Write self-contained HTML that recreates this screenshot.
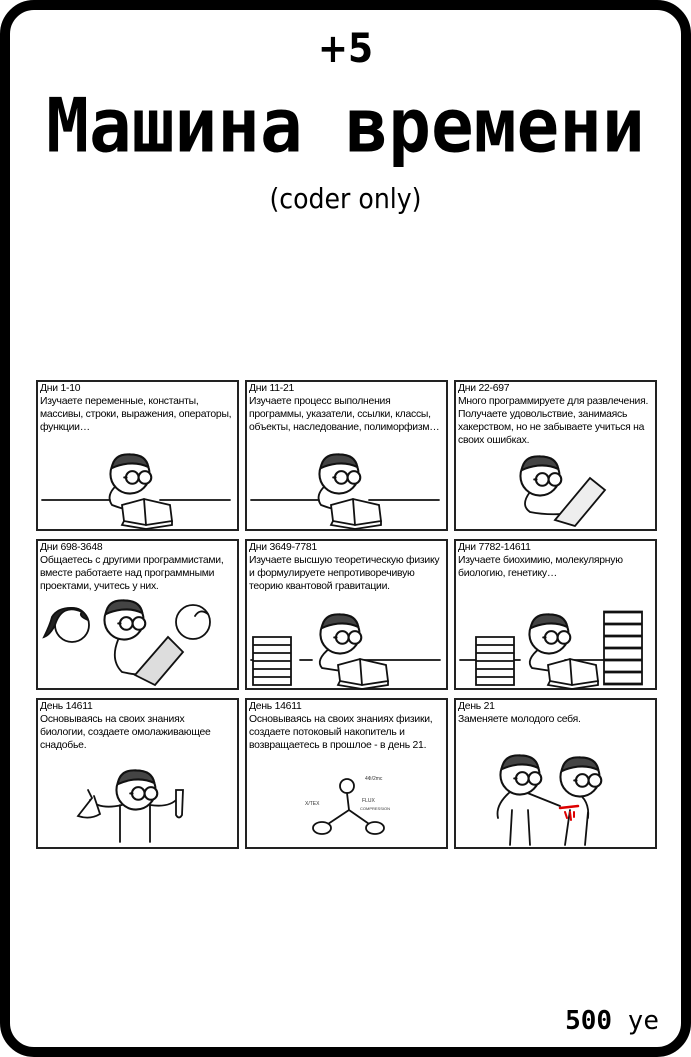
<!DOCTYPE html>
<html><head><meta charset="utf-8"><style>
html,body{margin:0;padding:0;background:#fff}
body{width:691px;height:1057px;position:relative;overflow:hidden}
.card{position:absolute;left:0;top:0;width:671px;height:1037px;border:10px solid #000;border-radius:34px;background:#fff}
.t{position:absolute;left:0;width:691px;text-align:center;color:#000}
.p{position:absolute;width:197px;height:147px;border:2px solid #222;font-family:"Liberation Sans",sans-serif;font-size:10.4px;line-height:13px;padding:0 0 0 2px;box-sizing:content-box;color:#000;letter-spacing:-0.25px}
.p div{padding-left:0}
</style></head><body>
<div class="card"></div>
<div class="t" style="top:24px;font-family:'DejaVu Sans Condensed','DejaVu Sans',sans-serif;font-weight:bold;font-size:40px;line-height:50px">+5</div>
<div class="t" style="top:84px;font-family:'DejaVu Sans Mono',monospace;font-weight:bold;font-size:71px;line-height:84px;transform:scaleY(1.06)">Машина времени</div>
<div class="t" style="top:182px;font-family:'DejaVu Sans Condensed','DejaVu Sans',sans-serif;font-size:28px;line-height:34px">(coder only)</div>

<div class="p" style="left:36px;top:380px"><div>Дни 1-10<br>Изучаете переменные, константы,<br>массивы, строки, выражения, операторы,<br>функции…</div></div>
<div class="p" style="left:245px;top:380px"><div>Дни 11-21<br>Изучаете процесс выполнения<br>программы, указатели, ссылки, классы,<br>объекты, наследование, полиморфизм…</div></div>
<div class="p" style="left:454px;top:380px"><div>Дни 22-697<br>Много программируете для развлечения.<br>Получаете удовольствие, занимаясь<br>хакерством, но не забываете учиться на<br>своих ошибках.</div></div>
<div class="p" style="left:36px;top:539px"><div>Дни 698-3648<br>Общаетесь с другими программистами,<br>вместе работаете над программными<br>проектами, учитесь у них.</div></div>
<div class="p" style="left:245px;top:539px"><div>Дни 3649-7781<br>Изучаете высшую теоретическую физику<br>и формулируете непротиворечивую<br>теорию квантовой гравитации.</div></div>
<div class="p" style="left:454px;top:539px"><div>Дни 7782-14611<br>Изучаете биохимию, молекулярную<br>биологию, генетику…</div></div>
<div class="p" style="left:36px;top:698px"><div>День 14611<br>Основываясь на своих знаниях<br>биологии, создаете омолаживающее<br>снадобье.</div></div>
<div class="p" style="left:245px;top:698px"><div>День 14611<br>Основываясь на своих знаниях физики,<br>создаете потоковый накопитель и<br>возвращаетесь в прошлое - в день 21.</div></div>
<div class="p" style="left:454px;top:698px"><div>День 21<br>Заменяете молодого себя.</div></div>

<svg style="position:absolute;left:0;top:0" width="691" height="1057" fill="none" stroke="#111" stroke-width="1.8" stroke-linecap="round">
<defs>
<g id="hd" transform="scale(1.15)"><circle r="17" fill="#fff"/><path d="M-16,-5 Q-14,-18 0,-17 Q14,-17 16,-6 Q8,-10 -2,-9 Q-10,-8 -16,-5Z" fill="#444"/><circle cx="2" cy="3" r="5.5" fill="#fff"/><circle cx="13" cy="3" r="5.5" fill="#fff"/><path d="M-5,3 L-3,3"/></g>
<g id="bk"><path d="M0,0 L22,-6 L48,0 L50,16 L24,20 L2,16Z" fill="#fff"/><path d="M22,-6 L24,20 M2,16 L0,20 L24,24 L50,20 L50,16"/></g>
<g id="st"><path d="M0,0 h38 v8 h-38z M0,8 h38 v8 h-38z M0,16 h38 v8 h-38z M0,24 h38 v8 h-38z M0,32 h38 v8 h-38z M0,40 h38 v8 h-38z" fill="#fff"/></g>
</defs>
<!-- panel 1 -->
<path d="M42,500 H110 M160,500 H230"/>
<path d="M118,484 Q105,495 112,505 Q125,510 138,512"/>
<use href="#bk" x="122" y="505"/>
<use href="#hd" x="130" y="474"/>
<!-- panel 2 -->
<path d="M251,500 H319 M369,500 H439"/>
<path d="M327,484 Q314,495 321,505 Q334,510 347,512"/>
<use href="#bk" x="331" y="505"/>
<use href="#hd" x="339" y="474"/>
<!-- panel 3 -->
<path d="M530,492 Q520,505 530,512 Q545,515 562,514"/>
<path d="M555,520 L590,478 L605,490 L575,526Z M555,520 L575,526" fill="#eee"/>
<use href="#hd" x="540" y="476"/>
<!-- panel 4 -->
<g transform="translate(72,625)"><circle r="17" fill="#fff"/><path d="M10,-13 Q-10,-22 -17,0 Q-22,10 -28,12 Q-22,0 -20,-8 Q-14,-18 2,-17 Q12,-16 16,-5 Q6,-9 10,-13Z" fill="#222"/></g>
<path d="M118,640 Q110,660 122,672 Q140,676 150,674"/>
<path d="M135,675 L168,637 L183,652 L155,685Z" fill="#ddd"/>
<use href="#hd" x="124" y="620"/>
<circle cx="193" cy="622" r="17" fill="#fff"/><path d="M195,616 Q200,608 208,614"/>
<!-- panel 5 -->
<path d="M251,660 H265 M300,660 H312 M360,660 H440"/>
<use href="#st" x="253" y="637"/>
<path d="M330,648 Q315,660 322,668 Q335,670 348,672"/>
<use href="#bk" x="338" y="665"/>
<use href="#hd" x="340" y="634"/>
<!-- panel 6 -->
<path d="M460,660 H476 M512,660 H520 M565,660 H640"/>
<use href="#st" x="476" y="637"/>
<g transform="translate(604,612) scale(1,1.5)"><use href="#st"/></g>
<path d="M540,648 Q525,660 532,668 Q545,670 558,672"/>
<use href="#bk" x="548" y="665"/>
<use href="#hd" x="549" y="634"/>
<!-- panel 7 -->
<path d="M122,805 Q100,810 90,800 M150,805 Q170,808 178,798 M120,805 L120,842 M150,805 L150,842"/>
<path d="M88,790 L92,798 L78,816 Q90,820 100,814 L94,796" fill="#fff"/>
<path d="M176,790 L183,790 L182,815 Q179,820 176,815Z" fill="#fff"/>
<use href="#hd" x="136" y="790"/>
<!-- panel 8 -->
<circle cx="347" cy="786" r="7" fill="#fff"/><path d="M347,793 L349,810 M349,810 L325,826 M349,810 L372,826"/>
<ellipse cx="322" cy="828" rx="9" ry="6" fill="#fff"/><ellipse cx="375" cy="828" rx="9" ry="6" fill="#fff"/>
<text x="305" y="805" font-size="5" font-family="Liberation Sans" fill="#333" stroke="none">Х/ТЕХ</text>
<text x="365" y="780" font-size="5" font-family="Liberation Sans" fill="#333" stroke="none">4Ф/2mc</text>
<text x="362" y="802" font-size="5" font-family="Liberation Sans" fill="#333" stroke="none">FLUX</text>
<text x="360" y="810" font-size="4" font-family="Liberation Sans" fill="#333" stroke="none">COMPRESSION</text>
<!-- panel 9 -->
<path d="M510,792 Q495,805 498,818 M525,792 L560,806 M512,810 L510,845 M528,810 L530,845"/>
<path d="M576,792 Q590,800 588,818 M570,810 L565,845 M588,812 L585,845"/>
<path d="M560,808 L578,806" stroke="#d00" stroke-width="2.5"/>
<path d="M565,812 l2,6 M570,812 l1,8 M574,812 l0,5" stroke="#d00" stroke-width="2"/>
<use href="#hd" x="520" y="775"/>
<use href="#hd" x="580" y="777"/>
</svg>

<div style="position:absolute;right:32px;top:1004px;font-family:'DejaVu Sans Mono',monospace;font-size:26px;line-height:34px"><b>500</b> уе</div>
</body></html>
